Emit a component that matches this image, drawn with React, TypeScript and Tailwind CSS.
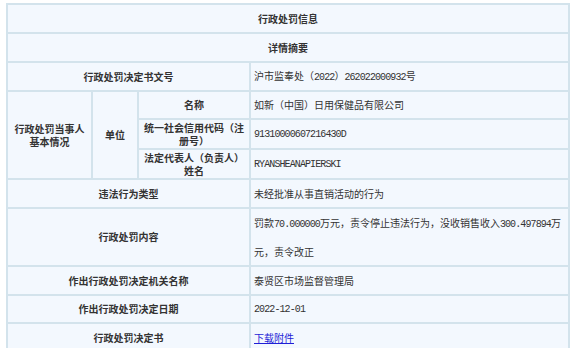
import type { ReactNode } from "react";

const cjk = "font-['Noto_Sans_CJK_SC','Noto_Sans',sans-serif]";

// half-width latin runs look like SimSun's narrow mono glyphs
function Num({ children }: { children: ReactNode }) {
  return (
    <span className="font-['Liberation_Mono','DejaVu_Sans_Mono',monospace] tracking-[-0.9px]">
      {children}
    </span>
  );
}

function Label({
  children,
  colSpan,
  rowSpan,
  tight,
}: {
  children: ReactNode;
  colSpan?: number;
  rowSpan?: number;
  tight?: boolean;
}) {
  return (
    <td
      colSpan={colSpan}
      rowSpan={rowSpan}
      className={`border-2 border-[#d3e3ec] px-1 py-0 text-center align-middle font-bold text-[#333] ${
        tight ? "leading-[13px]" : "leading-[16px]"
      }`}
    >
      {children}
    </td>
  );
}

function Value({ children, tall }: { children: ReactNode; tall?: boolean }) {
  return (
    <td
      className={`border-2 border-[#d3e3ec] py-0 pl-[3px] pr-1 text-left align-middle text-[#333] ${
        tall ? "leading-[27px]" : "leading-[16px]"
      }`}
    >
      {children}
    </td>
  );
}

export default function App() {
  return (
    <div className={`min-h-[348px] bg-white pl-[6px] pt-[3px] ${cjk} text-[10px]`}>
      <table className="w-[564px] table-fixed border-collapse border-2 border-[#c6dae6] bg-[#f3f8fe]">
        <colgroup>
          <col className="w-[85px]" />
          <col className="w-[46px]" />
          <col className="w-[112px]" />
          <col />
        </colgroup>
        <tbody>
          <tr className="h-[29px]">
            <Label colSpan={4}>行政处罚信息</Label>
          </tr>
          <tr className="h-[29px]">
            <Label colSpan={4}>详情摘要</Label>
          </tr>
          <tr className="h-[29px]">
            <Label colSpan={3}>行政处罚决定书文号</Label>
            <Value>
              沪市监奉处（<Num>2022</Num>）<Num>262022000932</Num>号
            </Value>
          </tr>
          <tr className="h-[28px]">
            <Label rowSpan={3} tight>
              行政处罚当事人
              <br />
              基本情况
            </Label>
            <Label rowSpan={3}>单位</Label>
            <Label>名称</Label>
            <Value>如新（中国）日用保健品有限公司</Value>
          </tr>
          <tr className="h-[30px]">
            <Label tight>统一社会信用代码（注册号）</Label>
            <Value>
              <Num>91310000607216430D</Num>
            </Value>
          </tr>
          <tr className="h-[30px]">
            <Label tight>法定代表人（负责人）姓名</Label>
            <Value>
              <Num>RYANSHEANAPIERSKI</Num>
            </Value>
          </tr>
          <tr className="h-[29px]">
            <Label colSpan={3}>违法行为类型</Label>
            <Value>未经批准从事直销活动的行为</Value>
          </tr>
          <tr className="h-[56px]">
            <Label colSpan={3}>行政处罚内容</Label>
            <Value tall>
              罚款<Num>70.000000</Num>万元，责令停止违法行为，没收销售收入<Num>300.497894</Num>万
              <br />
              元，责令改正
            </Value>
          </tr>
          <tr className="h-[29px]">
            <Label colSpan={3}>作出行政处罚决定机关名称</Label>
            <Value>泰贤区市场监督管理局</Value>
          </tr>
          <tr className="h-[28px]">
            <Label colSpan={3}>作出行政处罚决定日期</Label>
            <Value>
              <Num>2022-12-01</Num>
            </Value>
          </tr>
          <tr className="h-[29px]">
            <Label colSpan={3}>行政处罚决定书</Label>
            <Value>
              <a href="#" className="text-[#1f1fd6] underline">
                下载附件
              </a>
            </Value>
          </tr>
        </tbody>
      </table>
    </div>
  );
}
